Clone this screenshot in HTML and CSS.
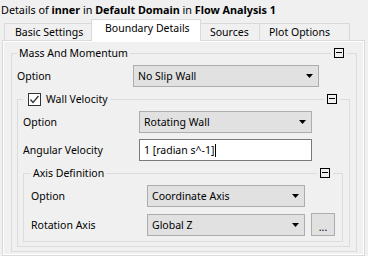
FILE: index.html
```html
<!DOCTYPE html>
<html lang="en">
<head>
    <meta charset="UTF-8">
    <meta name="viewport" content="width=device-width, initial-scale=1.0">
    <title>Details of inner</title>
    <link rel="stylesheet" href="styles.css">
</head>
<body>
    <div class="title">Details of <b>inner</b> in <b>Default Domain</b> in <b>Flow Analysis 1</b></div>

    <div class="tabs">
        <div class="tab tab-basic">Basic Settings</div>
        <div class="tab tab-boundary active">Boundary Details</div>
        <div class="tab tab-sources">Sources</div>
        <div class="tab tab-plot">Plot Options</div>
    </div>

    <div class="pane">
        <!-- Mass And Momentum -->
        <div class="group">
            <div class="group-head">
                <span class="corner-left"></span>
                <span class="legend">Mass And Momentum</span>
                <span class="head-line"></span>
                <span class="collapse"></span>
                <span class="corner-right"></span>
            </div>
            <div class="group-body">
                <div class="row">
                    <span class="label">Option</span>
                    <div class="combo">
                        <span>No Slip Wall</span>
                        <svg class="arrow" width="7" height="4" viewBox="0 0 7 4"><polygon points="0,0 7,0 3.5,4"/></svg>
                    </div>
                </div>

                <!-- Wall Velocity -->
                <div class="group">
                    <div class="group-head">
                        <span class="corner-left"></span>
                        <span class="legend">
                            <span class="check">
                                <svg width="11" height="11" viewBox="0 0 11 11"><polyline points="1.5,5.5 4,8.5 9.5,2" fill="none" stroke="#333" stroke-width="1.3"/></svg>
                            </span>Wall Velocity
                        </span>
                        <span class="head-line"></span>
                        <span class="collapse"></span>
                        <span class="corner-right"></span>
                    </div>
                    <div class="group-body">
                        <div class="row">
                            <span class="label">Option</span>
                            <div class="combo">
                                <span>Rotating Wall</span>
                                <svg class="arrow" width="7" height="4" viewBox="0 0 7 4"><polygon points="0,0 7,0 3.5,4"/></svg>
                            </div>
                        </div>
                        <div class="row">
                            <span class="label">Angular Velocity</span>
                            <div class="field">1 [radian s^-1]<span class="caret"></span></div>
                        </div>

                        <!-- Axis Definition -->
                        <div class="group axis">
                            <div class="group-head">
                                <span class="corner-left"></span>
                                <span class="legend">Axis Definition</span>
                                <span class="head-line"></span>
                                <span class="collapse"></span>
                                <span class="corner-right"></span>
                            </div>
                            <div class="group-body">
                                <div class="row">
                                    <span class="label">Option</span>
                                    <div class="combo">
                                        <span>Coordinate Axis</span>
                                        <svg class="arrow" width="7" height="4" viewBox="0 0 7 4"><polygon points="0,0 7,0 3.5,4"/></svg>
                                    </div>
                                </div>
                                <div class="row">
                                    <span class="label">Rotation Axis</span>
                                    <div class="combo">
                                        <span>Global Z</span>
                                        <svg class="arrow" width="7" height="4" viewBox="0 0 7 4"><polygon points="0,0 7,0 3.5,4"/></svg>
                                    </div>
                                    <button class="more">...</button>
                                </div>
                            </div>
                        </div>
                    </div>
                </div>
            </div>
        </div>
    </div>
</body>
</html>
```

FILE: styles.css
```css
body {
    margin: 0;
    background-color: #f0f0f0;
    font-family: 'Noto Sans', sans-serif;
    font-size: 10.5px;
    color: #000;
}

.title {
    height: 17px;
    padding: 2px 1px 0;
    font-size: 10.8px;
    line-height: 15px;
    box-sizing: border-box;
}

/* tab strip */
.tabs {
    display: flex;
    align-items: flex-end;
    height: 23px;
    padding-left: 4px;
    box-sizing: border-box;
}

.tab {
    height: 17px;
    line-height: 17px;
    padding-left: 9px;
    box-sizing: border-box;
    border: 1px solid #d9d9d9;
    border-bottom: none;
    margin-right: -1px;
    background-color: #f0f0f0;
}

.tab-basic { width: 88px; padding-left: 10px; }
.tab-boundary { width: 110px; }
.tab-sources { width: 60px; }
.tab-plot { width: 91px; }

.tab.active {
    height: 22px;
    line-height: 16px;
    padding-left: 13px;
    background-color: #fff;
    margin-bottom: -1px;
    position: relative;
    z-index: 1;
}

.pane {
    margin: 0 3px 0 2px;
    padding: 5px 7px 3px 8px;
    border: 1px solid #d9d9d9;
    box-shadow: inset 0 0 0 1px #fff;
}

/* group boxes */
.group-head {
    display: flex;
    height: 14px;
    line-height: 14px;
}

.corner-left,
.head-line,
.corner-right {
    align-self: flex-end;
    height: 6px;
    border-top: 1px solid #dcdcdc;
}

.corner-left {
    width: 5px;
    border-left: 1px solid #dcdcdc;
}

.corner-right {
    width: 9px;
    border-right: 1px solid #dcdcdc;
}

.head-line {
    flex: 1;
}

.legend {
    padding: 0 2px;
    display: flex;
    align-items: center;
}

.collapse {
    width: 8px;
    height: 8px;
    margin: 2px 3px 0;
    border: 1px solid #000;
    position: relative;
}

.collapse::after {
    content: '';
    position: absolute;
    left: 1px;
    right: 1px;
    top: 3px;
    height: 1px;
    background-color: #000;
}

.check {
    width: 11px;
    height: 11px;
    margin: 0 5px 0 3px;
    border: 1px solid #333;
    background-color: #fff;
    display: flex;
}

.group-body {
    display: flex;
    flex-direction: column;
    gap: 6px;
    padding: 5px 6px 4px 5px;
    border: 1px solid #dcdcdc;
    border-top: none;
}

.group-body > .group {
    margin-top: -1px;
}

.axis .corner-left {
    width: 7px;
}

.axis > .group-body {
    padding: 5px 6px 5px 7px;
}

/* form rows */
.row {
    display: grid;
    grid-template-columns: 116px 1fr 31px;
    align-items: center;
}

.combo,
.field {
    height: 22px;
    box-sizing: border-box;
    display: flex;
    align-items: center;
    padding-left: 4px;
}

.combo {
    justify-content: space-between;
    padding-right: 5px;
    background-color: #e1e1e1;
    border: 1px solid #adadad;
}

.field {
    background-color: #fff;
    border: 1px solid #7a7a7a;
}

.caret {
    width: 1px;
    height: 13px;
    margin-left: 1px;
    background-color: #000;
}

.more {
    width: 24px;
    height: 23px;
    margin-left: 6px;
    padding: 4px 0 0;
    font-family: inherit;
    font-size: inherit;
    background-color: #e1e1e1;
    border: 1px solid #adadad;
}
```
